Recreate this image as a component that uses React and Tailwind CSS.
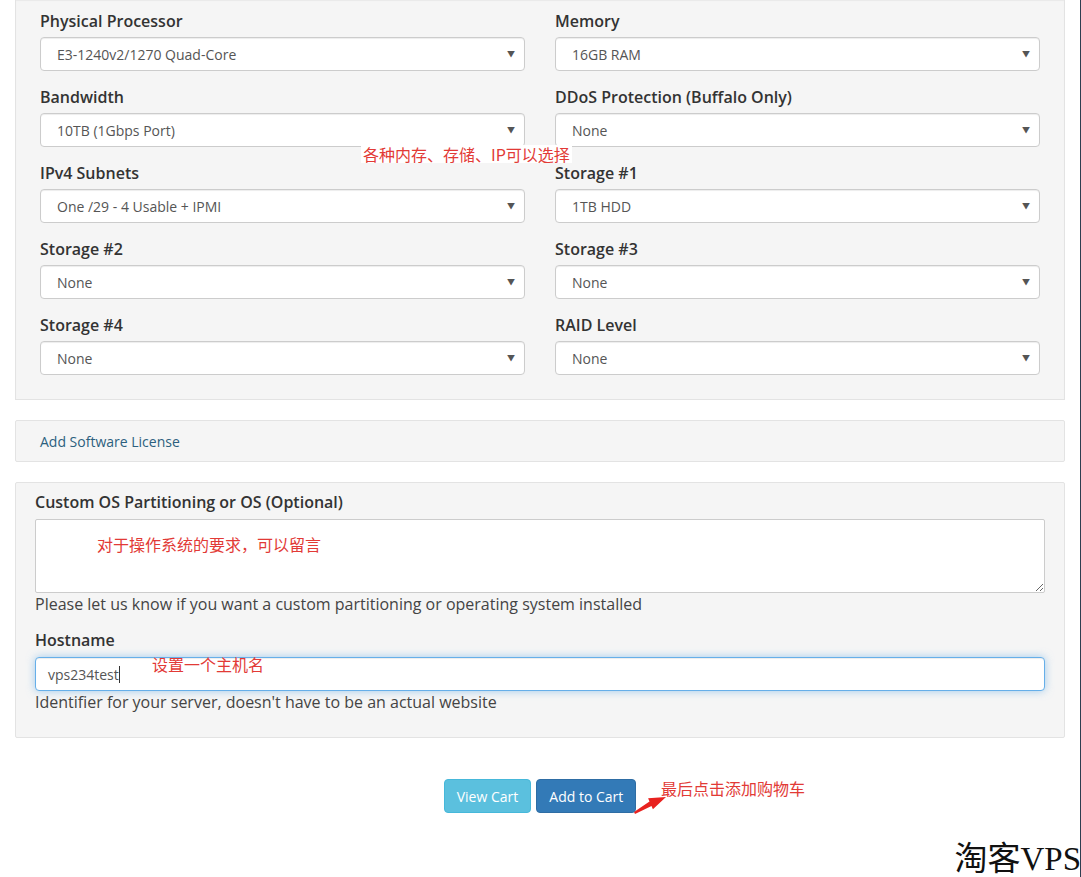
import React from 'react';

const fields = [
  ['Physical Processor', 'E3-1240v2/1270 Quad-Core'],
  ['Memory', '16GB RAM'],
  ['Bandwidth', '10TB (1Gbps Port)'],
  ['DDoS Protection (Buffalo Only)', 'None'],
  ['IPv4 Subnets', 'One /29 - 4 Usable + IPMI'],
  ['Storage #1', '1TB HDD'],
  ['Storage #2', 'None'],
  ['Storage #3', 'None'],
  ['Storage #4', 'None'],
  ['RAID Level', 'None'],
];

const SelectField = ({ label, value }) => (
  <div className="mb-[15px]">
    <div className="text-[16px] leading-[22px] font-semibold text-[#333] mb-[5px]">{label}</div>
    <div className="h-[34px] bg-white border border-[#ccc] rounded-[4px] shadow-[inset_0_1px_1px_rgba(0,0,0,0.075)] flex items-center justify-between pl-[16px] pr-[9px]">
      <span className="text-[14px] text-[#555]">{value}</span>
      <span className="text-[8px] text-[#555]">▼</span>
    </div>
  </div>
);

const Note = ({ className, children }) => (
  <div className={`absolute text-[16px] leading-[18px] text-[#e23a36] ${className}`} style={{ fontFamily: '"Noto Sans CJK SC", sans-serif' }}>
    {children}
  </div>
);

export default function App() {
  return (
    <div className="relative w-[1081px] h-[877px] overflow-hidden bg-white" style={{ fontFamily: '"Open Sans", "Noto Sans CJK SC", sans-serif' }}>
      <div className="px-[15px] pr-[16px]">
        {/* configurable options */}
        <div className="bg-[#f5f5f5] border border-t-0 border-[#e3e3e3] shadow-[inset_0_1px_1px_rgba(0,0,0,0.05)] px-[24px] pt-[10px] pb-[9px]">
          <div className="grid grid-cols-2 gap-x-[30px]">
            {fields.map(([l, v]) => (
              <SelectField key={l} label={l} value={v} />
            ))}
          </div>
        </div>

        {/* addons */}
        <div className="mt-[20px] h-[42px] bg-[#f5f5f5] border border-[#e3e3e3] rounded-[2px] flex items-center px-[24px]">
          <span className="text-[14px] text-[#2c5f7e]">Add Software License</span>
        </div>

        {/* custom fields */}
        <div className="mt-[20px] bg-[#f5f5f5] border border-[#e3e3e3] rounded-[2px] px-[19px] pt-[8px] pb-[24px]">
          <div className="text-[16px] leading-[22px] font-semibold text-[#333] mb-[6px]">Custom OS Partitioning or OS (Optional)</div>
          <textarea
            readOnly
            className="block w-full h-[74px] bg-white border border-[#ccc] rounded-[2px] resize-y outline-none"
          />
          <div className="text-[16px] leading-[22px] text-[#444]">Please let us know if you want a custom partitioning or operating system installed</div>
          <div className="text-[16px] leading-[22px] font-semibold text-[#333] mt-[14px] mb-[6px]">Hostname</div>
          <div className="h-[34px] bg-white border border-[#66afe9] rounded-[4px] shadow-[inset_0_1px_1px_rgba(0,0,0,0.075),0_0_8px_rgba(102,175,233,0.6)] flex items-center pl-[12px]">
            <span className="text-[14px] text-[#555]">vps234test</span>
            <span className="w-px h-[17px] bg-[#333]" />
          </div>
          <div className="text-[16px] leading-[22px] text-[#444]">Identifier for your server, doesn't have to be an actual website</div>
        </div>

        {/* buttons */}
        <div className="mt-[41px] flex justify-center gap-[5px]">
          <button className="h-[34px] px-[12px] text-[14px] text-white bg-[#5bc0de] border border-[#46b8da] rounded-[4px]">View Cart</button>
          <button className="h-[34px] px-[12px] text-[14px] text-white bg-[#337ab7] border border-[#2e6da4] rounded-[4px]">Add to Cart</button>
        </div>
      </div>

      {/* annotations */}
      <Note className="left-[361px] top-[145px] bg-white px-[2px]">各种内存、存储、IP可以选择</Note>
      <Note className="left-[97px] top-[535px]">对于操作系统的要求，可以留言</Note>
      <Note className="left-[152px] top-[655px]">设置一个主机名</Note>
      <Note className="left-[661px] top-[779px]">最后点击添加购物车</Note>
      <svg className="absolute left-[630px] top-[790px]" width="40" height="26" viewBox="0 0 40 26">
        <path d="M4 22 L19.5 11.5 L18.1 8.3 L36 7 L22.9 19.3 L21.5 16.1 L5 24 Z" fill="#e8221f" />
      </svg>

      {/* watermark */}
      <div className="absolute right-0 bottom-[-2px] text-[33px] leading-[40px] text-[#111]" style={{ fontFamily: '"Liberation Serif", "Noto Sans CJK SC", serif' }}>
        淘客VPS
      </div>

      {/* right edge line */}
      <div className="absolute right-0 top-0 h-full w-px bg-[#2d3e50]" />
    </div>
  );
}
